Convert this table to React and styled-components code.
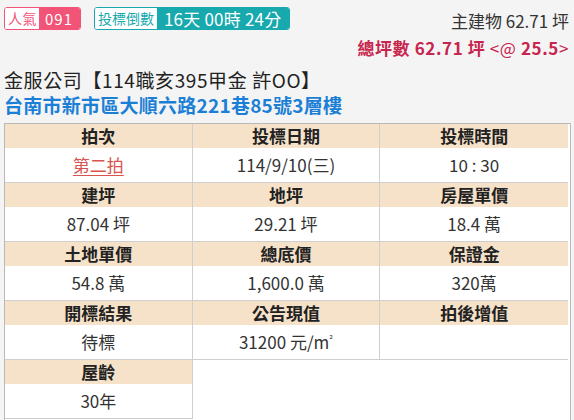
import styled, { createGlobalStyle } from "styled-components"

const Global = createGlobalStyle`
body{margin:0;background:#f4f4f4;font-family:"Noto Sans CJK TC","Noto Sans",sans-serif;color:#333;}
`

const cells = [
    { t: '拍次', v: '第二拍', link: true },
    { t: '投標日期', v: '114/9/10(三)' },
    { t: '投標時間', v: '10 : 30' },
    { t: '建坪', v: '87.04 坪' },
    { t: '地坪', v: '29.21 坪' },
    { t: '房屋單價', v: '18.4 萬' },
    { t: '土地單價', v: '54.8 萬' },
    { t: '總底價', v: '1,600.0 萬' },
    { t: '保證金', v: '320萬' },
    { t: '開標結果', v: '待標' },
    { t: '公告現值', v: <>31200 元/m<sup>²</sup></> },
    { t: '拍後增值', v: '' },
    { t: '屋齡', v: '30年' },
]

export default function App(){
    return(
    <Pagina>
        <Global/>
        <Topo>
            <Badges>
                <Badge cor={'#f25478'}>
                    <span>人氣</span>
                    <b>091</b>
                </Badge>
                <Badge cor={'#17a9ad'} grande>
                    <span>投標倒數</span>
                    <b>16天 00時 24分</b>
                </Badge>
            </Badges>
            <Areas>
                <p>主建物 62.71 坪</p>
                <Total><strong>總坪數 62.71 坪</strong> &lt;@ <strong>25.5</strong>&gt;</Total>
            </Areas>
        </Topo>
        <Titulo>金服公司【114職亥395甲金 許OO】</Titulo>
        <Endereco>台南市新市區大順六路221巷85號3層樓</Endereco>
        <Moldura>
            <Tabela>
                {cells.map((c,i)=>(
                    <Celula key={i} ultima={i%3==2}>
                        <Cab>{c.t}</Cab>
                        <Valor>{c.link?<Link>{c.v}</Link>:c.v}</Valor>
                    </Celula>
                ))}
            </Tabela>
        </Moldura>
    </Pagina>
    )
}

const Pagina=styled.div`
padding:7px 3px 0 4px;
height:413px;overflow:hidden;
display:flex;flex-direction:column;
`
const Topo=styled.div`
display:flex;justify-content:space-between;align-items:flex-start;
padding-right:2px;
`
const Badges=styled.div`
display:flex;gap:13px;
`
const Badge=styled.div`
display:flex;height:23px;box-sizing:border-box;
border:1px solid ${p=>p.cor};border-radius:3px;overflow:hidden;
span{background:#fff;color:${p=>p.cor};font-size:14px;line-height:21px;
padding:${p=>p.grande?'0 3px':'0 2px 0 3px'};letter-spacing:${p=>p.grande?'0':'0.5px'};}
b{background:${p=>p.cor};color:#fff;font-weight:400;
font-size:${p=>p.grande?'17px':'15px'};line-height:21px;
padding:${p=>p.grande?'0 8px 0 7px':'0 7px 0 6px'};letter-spacing:${p=>p.grande?'0.2px':'1px'};}
`
const Areas=styled.div`
display:flex;flex-direction:column;align-items:flex-end;
font-size:17px;line-height:27px;
p{margin:0;color:#333;}
`
const Total=styled.p`
&&{color:#c7254e;letter-spacing:0.6px;}
strong{font-weight:700;}
`
const Titulo=styled.div`
margin-top:6px;font-size:19px;line-height:25px;color:#222;letter-spacing:0.6px;
`
const Endereco=styled.div`
font-size:19px;line-height:25px;color:#1b7fd6;font-weight:700;letter-spacing:0.25px;
`
const Moldura=styled.div`
margin-top:6px;flex:1;
border:1px solid #b9b9b9;border-bottom:none;
padding-right:2px;background:#fff;
`
const Tabela=styled.div`
display:grid;grid-template-columns:repeat(3,1fr);
`
const Celula=styled.div`
border-right:${p=>p.ultima?'none':'1px solid #cfcfcf'};
border-bottom:1px solid #cfcfcf;
text-align:center;
`
const Cab=styled.div`
height:24px;line-height:24px;background:#f6e1c9;
font-size:17px;font-weight:700;color:#222;
`
const Valor=styled.div`
height:34px;line-height:34px;font-size:17px;color:#333;
sup{font-size:9px;vertical-align:6px;line-height:0;}
`
const Link=styled.span`
color:#d9534f;text-decoration:underline;text-underline-offset:3px;
`
